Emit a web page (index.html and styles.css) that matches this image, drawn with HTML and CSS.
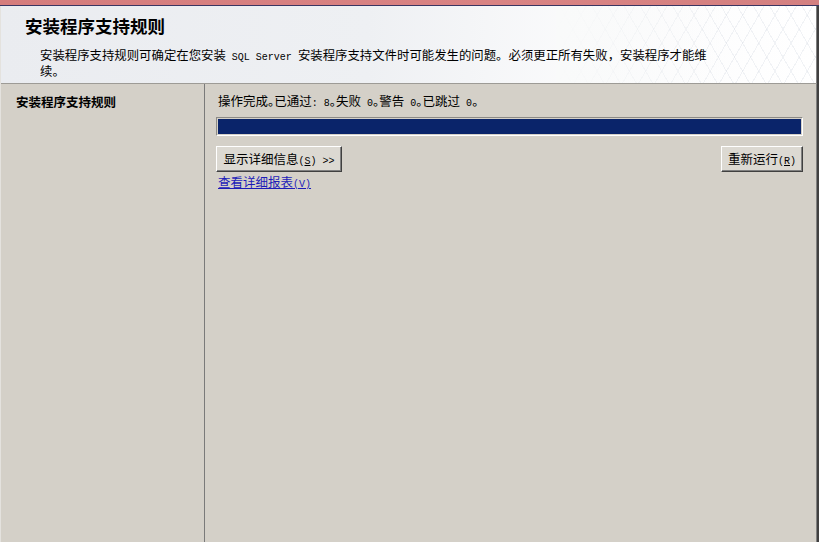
FILE: index.html
```html
<!DOCTYPE html>
<html lang="zh-CN">
<head>
<meta charset="utf-8">
<title>安装程序支持规则</title>
<link rel="stylesheet" href="styles.css">
</head>
<body>
<div class="titlebar"></div>
<div class="frame">
  <div class="header">
    <h1 class="title">安装程序支持规则</h1>
    <p class="desc"><span>安装程序支持规则可确定在您安装</span><span class="m">SQL Server</span><span>安装程序支持文件时可能发生的问题。必须更正所有失败，安装程序才能维</span><span>续。</span></p>
  </div>
  <div class="main">
    <div class="sidebar">
      <div class="nav-item">安装程序支持规则</div>
    </div>
    <div class="content">
      <p class="status">操作完成。已通过<span class="m">: 8</span>。失败<span class="m"> 0</span>。警告<span class="m"> 0</span>。已跳过<span class="m"> 0</span>。</p>
      <div class="progress"><div class="progress-fill"></div></div>
      <div class="actions">
        <button class="btn btn-details">显示详细信息<span class="m">(<u>S</u>) &gt;&gt;</span></button>
        <button class="btn btn-rerun">重新运行<span class="m">(<u>R</u>)</span></button>
      </div>
      <a class="report-link" href="#">查看详细报表<span class="m">(V)</span></a>
    </div>
  </div>
</div>
</body>
</html>
```
FILE: styles.css
```css
html, body {
  margin: 0;
  padding: 0;
}
body {
  width: 819px;
  height: 542px;
  overflow: hidden;
  background: #d4d0c8;
  font-family: "Noto Sans CJK SC", "Noto Sans", sans-serif;
  font-size: 12.5px;
  color: #000;
  display: flex;
  flex-direction: column;
}
.m {
  font-family: "Liberation Mono", "DejaVu Sans Mono", monospace;
  font-size: 10px;
  line-height: 1;
}
.desc .m {
  margin: 0 6px;
}
.titlebar {
  height: 5px;
  background: linear-gradient(to right, #d57c7c, #d98383 60%, #d48080);
  border-bottom: 1px solid #3a3562;
  flex: none;
}
.frame {
  flex: 1;
  display: flex;
  flex-direction: column;
  border-left: 1px solid #e4e2de;
  border-right: 2px solid #404040;
  box-sizing: border-box;
  min-height: 0;
}
.header {
  height: 78px;
  box-sizing: border-box;
  border-bottom: 1px solid #9d9b96;
  border-right: 1px solid #808080;
  padding-top: 10px;
  background-color: #eef0f3;
  background-image:
    linear-gradient(to right, #f9fafa 0%, rgba(255,255,255,0) 65%),
    repeating-linear-gradient(60deg, rgba(255,255,255,0) 0 13px, rgba(215,220,228,0.35) 13px 14px),
    repeating-linear-gradient(-60deg, rgba(255,255,255,0) 0 13px, rgba(215,220,228,0.35) 13px 14px),
    linear-gradient(to right, #eaecf0 0%, #eef0f3 45%, #fbfbfc 72%, #ffffff 100%);
  background-size: 260px 100%, 260px 100%, 260px 100%, 100% 100%;
  background-position: right top, right top, right top, left top;
  background-repeat: no-repeat;
  flex: none;
}
.title {
  margin: 0 0 0 24px;
  font-size: 17.5px;
  line-height: 20px;
  font-weight: bold;
}
.desc {
  margin: 11px 0 0 39px;
  width: 669px;
  font-size: 12.4px;
  line-height: 16px;
}
.main {
  flex: 1;
  display: flex;
  min-height: 0;
  border-right: 1px solid #808080;
}
.sidebar {
  width: 204px;
  flex: none;
  border-right: 1px solid #7a7a7a;
  box-sizing: border-box;
  padding: 10px 0 0 15px;
}
.nav-item {
  font-weight: bold;
  line-height: 16px;
}
.content {
  flex: 1;
  padding: 9px 13px 0 11px;
}
.status {
  margin: 0 0 0 2px;
  line-height: 16px;
  font-feature-settings: "halt";
}
.progress {
  margin-top: 8px;
  height: 19px;
  box-sizing: border-box;
  border: 1px solid;
  border-color: #8c8a86 #ffffff #ffffff #8c8a86;
  padding: 1px;
}
.progress-fill {
  height: 100%;
  background: #0a246a;
}
.actions {
  margin-top: 10px;
  display: flex;
  justify-content: space-between;
}
.btn {
  height: 26px;
  box-sizing: border-box;
  padding: 0;
  font-family: inherit;
  font-size: 12.5px;
  color: #000;
  background: #dcd9d2;
  border: 1px solid;
  border-color: #ffffff #404040 #404040 #ffffff;
  box-shadow: inset -1px -1px 0 #808080;
  line-height: 22px;
}
.btn-details {
  width: 126px;
}
.btn-rerun {
  width: 82px;
}
.report-link {
  display: inline-block;
  margin: 3px 0 0 2px;
  line-height: 14px;
  color: #1c1cb8;
  text-decoration: underline;
}
```
